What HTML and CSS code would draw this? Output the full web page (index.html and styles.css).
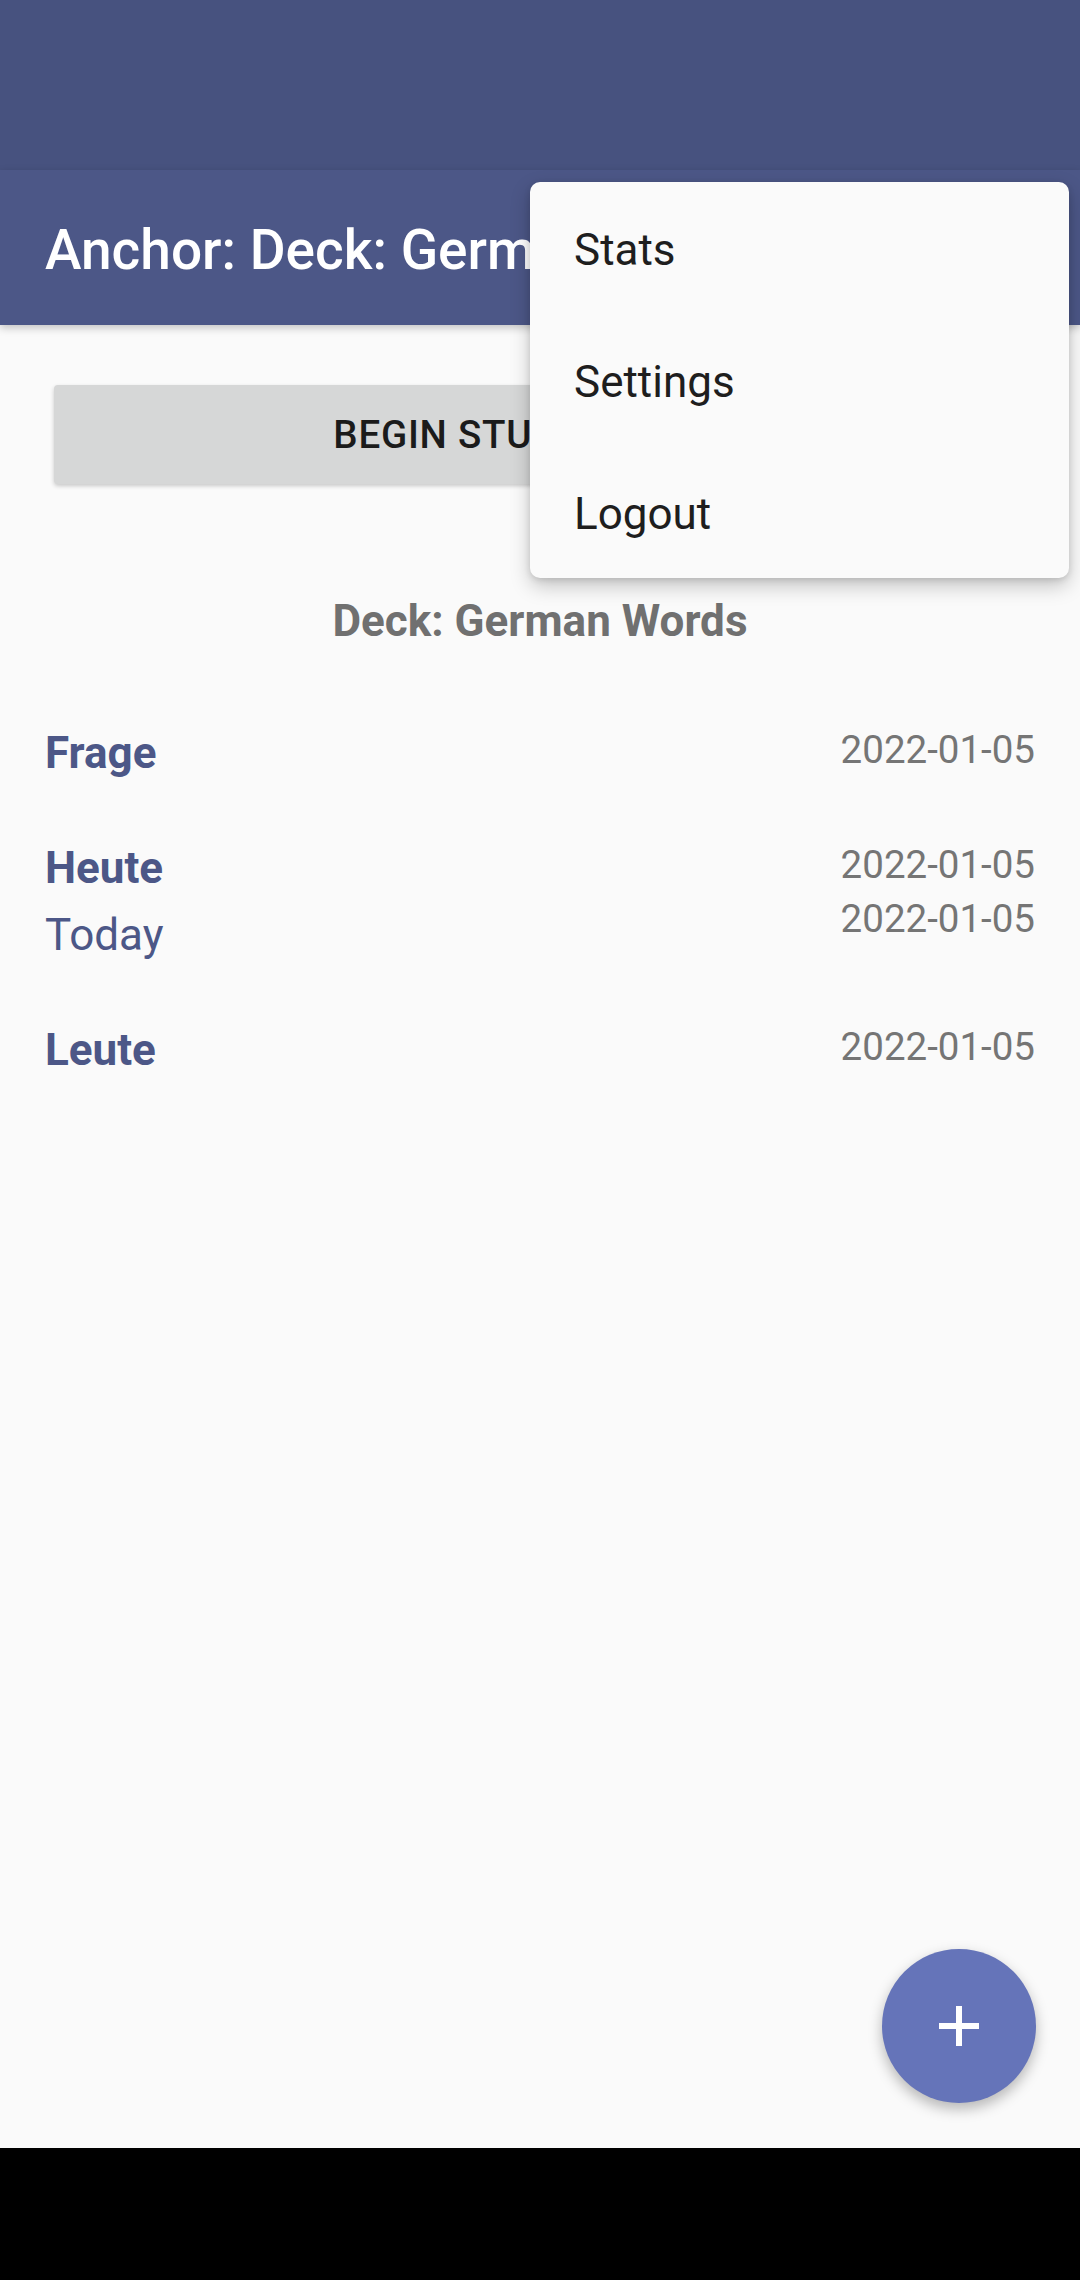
FILE: index.html
```html
<!DOCTYPE html>
<html>
<head>
<meta charset="utf-8">
<link rel="stylesheet" href="styles.css">
</head>
<body>
<div class="screen">
  <div class="status"></div>
  <header class="appbar"><span class="title">Anchor: Deck: German Words</span></header>
  <main class="main">
    <div class="btn-row"><button class="btn">BEGIN STUDY</button></div>
    <div class="deck-title">Deck: German Words</div>
    <div class="list">
      <div class="item">
        <div class="words"><div class="word">Frage</div></div>
        <div class="dates"><div>2022-01-05</div></div>
      </div>
      <div class="item">
        <div class="words"><div class="word">Heute</div><div class="trans">Today</div></div>
        <div class="dates"><div>2022-01-05</div><div>2022-01-05</div></div>
      </div>
      <div class="item">
        <div class="words"><div class="word">Leute</div></div>
        <div class="dates"><div>2022-01-05</div></div>
      </div>
    </div>
  </main>
  <div class="navbar"></div>
  <div class="menu">
    <div class="menu-item">Stats</div>
    <div class="menu-item">Settings</div>
    <div class="menu-item">Logout</div>
  </div>
  <div class="fab">
    <svg width="42" height="42" viewBox="0 0 42 42"><path d="M18 1h6v17h17v6H24v17h-6V24H1v-6h17z" fill="#fff"/></svg>
  </div>
</div>
</body>
</html>
```
FILE: styles.css
```css
html, body {
  margin: 0;
  padding: 0;
}
body {
  font-family: Roboto, "Noto Sans", sans-serif;
  background: #fafafa;
}
.screen {
  position: relative;
  width: 1080px;
  height: 2280px;
  overflow: hidden;
  display: flex;
  flex-direction: column;
  background: #fafafa;
}
.status {
  height: 170px;
  background: #47527f;
  flex: none;
}
.appbar {
  height: 155px;
  box-sizing: border-box;
  flex: none;
  background: #4c5787;
  display: flex;
  align-items: center;
  padding-left: 45px;
  padding-top: 5px;
  box-shadow: 0 3px 8px rgba(0,0,0,0.22);
  position: relative;
  z-index: 1;
  overflow: hidden;
}
.title {
  color: #fff;
  font-size: 55px;
  font-weight: 500;
  white-space: nowrap;
  overflow: hidden;
  max-width: 485px;
}
.main {
  flex: 1;
  padding-top: 60px;
}
.btn-row {
  padding: 0 219px 0 54px;
}
.btn {
  display: block;
  width: 100%;
  height: 99px;
  border: none;
  border-radius: 4px;
  background: #d6d7d7;
  color: #1b1b1b;
  font-family: Roboto, sans-serif;
  font-size: 38.5px;
  font-weight: 500;
  letter-spacing: 0.02em;
  box-shadow: 0 2px 4px rgba(0,0,0,0.2);
}
.deck-title {
  margin-top: 111px;
  text-align: center;
  font-size: 44px;
  line-height: 52px;
  font-weight: 700;
  color: #707070;
}
.list {
  margin-top: 80px;
  padding: 0 45px;
  display: flex;
  flex-direction: column;
  gap: 63px;
}
.item {
  display: flex;
  justify-content: space-between;
  align-items: flex-start;
}
.word {
  font-size: 44px;
  line-height: 52px;
  font-weight: 700;
  color: #4c5787;
}
.trans {
  margin-top: 15px;
  font-size: 44px;
  line-height: 52px;
  color: #4c5787;
}
.dates {
  display: flex;
  flex-direction: column;
  gap: 9px;
  text-align: right;
  font-size: 38.5px;
  line-height: 45px;
  color: #757575;
}
.navbar {
  height: 132px;
  flex: none;
  background: #000;
}
.menu {
  position: absolute;
  top: 182px;
  left: 530px;
  width: 539px;
  height: 396px;
  background: #fafafa;
  border-radius: 10px;
  box-shadow: 0 8px 20px rgba(0,0,0,0.22), 0 2px 6px rgba(0,0,0,0.12);
  z-index: 5;
}
.menu-item {
  height: 132px;
  box-sizing: border-box;
  padding-top: 4px;
  display: flex;
  align-items: center;
  padding-left: 44px;
  font-size: 44px;
  color: #1e1e1e;
}
.fab {
  position: absolute;
  left: 882px;
  top: 1949px;
  width: 154px;
  height: 154px;
  border-radius: 50%;
  background: #6574b9;
  box-shadow: 0 6px 14px rgba(0,0,0,0.28);
  display: flex;
  align-items: center;
  justify-content: center;
  z-index: 4;
}
```
